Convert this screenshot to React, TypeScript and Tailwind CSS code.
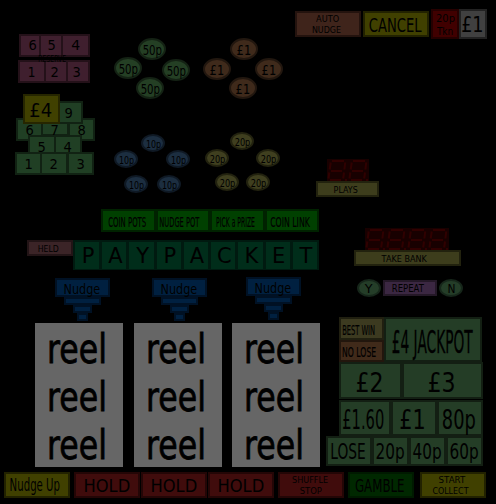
import { useLayoutEffect, useRef, type ReactNode } from "react";
import { clsx } from "clsx";

/** Lamp caption, squeezed horizontally so its ink is `w` pixels wide. */
function T({ children, w, className }: { children: string; w?: number; className?: string }) {
  const ref = useRef<HTMLSpanElement>(null);
  useLayoutEffect(() => {
    const el = ref.current;
    if (!el || !w) return;
    el.style.transform = "none";
    const size = parseFloat(getComputedStyle(el).fontSize);
    const k = w / (el.getBoundingClientRect().width - size * 0.14);
    el.style.transform = `scaleX(${k})`;
  }, [w, children]);
  return (
    <span ref={ref} className={clsx("inline-block shrink-0 whitespace-nowrap leading-none", className)}>
      {children}
    </span>
  );
}

function Lamp({ className, children }: { className: string; children?: ReactNode }) {
  return (
    <div className={clsx("flex shrink-0 flex-col items-center justify-center border-2", className)}>{children}</div>
  );
}

const GREEN = "bg-[#203f24] border-[#112213]";
const PRIZE = "bg-[#243d26] border-[#131f13]";
const PLUM = "bg-[#3f1f2e] border-[#241119]";
const RED = "bg-[#400c0c] border-[#240606]";

type Spot = [string, string];

function Coins({ spots, label, w, coin, text }: { spots: string[]; label: string; w: number; coin: string; text: string }) {
  return (
    <>
      {spots.map((s) => (
        <Lamp key={s} className={clsx("absolute rounded-[50%]", coin, s)}>
          <T w={w} className={text}>{label}</T>
        </Lamp>
      ))}
    </>
  );
}

const pyramid: Spot[] = [
  ["6", "left-[16px] top-[118px] w-[27px] h-[23px]"],
  ["7", "left-[41px] top-[118px] w-[28px] h-[18px] pt-[5px]"],
  ["8", "left-[68px] top-[118px] w-[27px] h-[23px]"],
  ["4", "left-[54px] top-[135px] w-[28px] h-[23px]"],
  ["5", "left-[28px] top-[135px] w-[28px] h-[23px]"],
  ["1", "left-[15px] top-[152px] w-[27px] h-[23px]"],
  ["3", "left-[67px] top-[152px] w-[27px] h-[23px]"],
  ["2", "left-[40px] top-[152px] w-[28px] h-[23px]"],
  ["9", "left-[55px] top-[101px] w-[28px] h-[23px]"],
];

function Digit() {
  return (
    <svg width="21" height="23" viewBox="0 0 21 23" className="bg-[#180000]" fill="none" stroke="#300000" strokeWidth="2">
      <path d="M5 2H17M4 12H15M3 21H14M3.7 3.5L2.7 10.5M2.3 13.5L1.5 19.5M18.2 3.5L17.4 10.5M17 13.5L16.2 19.5" />
      <path d="M18 21H20" />
    </svg>
  );
}

function Nudge({ className }: { className: string }) {
  const step = "bg-[#002040] border-[#001124]";
  return (
    <div className={clsx("flex w-[55px] flex-col items-center", className)}>
      <Lamp className={clsx("h-[19px] w-[55px]", step)}>
        <T w={35} className="-translate-x-px translate-y-px text-[14px]">Nudge</T>
      </Lamp>
      <Lamp className={clsx("h-2 w-[37px]", step)} />
      <Lamp className={clsx("h-2 w-[19px]", step)} />
      <Lamp className={clsx("h-2 w-[11px]", step)} />
    </div>
  );
}

function Reel() {
  return (
    <div className="flex h-36 w-[88px] flex-col bg-[#666]">
      {[0, 1, 2].map((i) => (
        <div key={i} className="flex h-12 items-center justify-center">
          <T w={55.5} className="-translate-x-[2px] translate-y-[1.5px] text-[40px] [-webkit-text-stroke:0.8px_black]">reel</T>
        </div>
      ))}
    </div>
  );
}

export default function App() {
  return (
    <main className="relative flex h-[504px] w-[496px] flex-col overflow-hidden bg-black font-['DejaVu_Sans',sans-serif] text-black">
      <header className="flex h-[34px] shrink-0 items-start pl-[295px] pt-[9px]">
        <Lamp className="mr-[2px] mt-[2px] h-[26px] w-[66px] border-[#24130e] bg-[#3f241b]">
          <T w={22} className="text-[9px]">AUTO</T>
          <T w={28} className="-translate-x-[2px] translate-y-[2px] text-[9px]">NUDGE</T>
        </Lamp>
        <Lamp className="mr-[2px] mt-[2px] h-[26px] w-[66px] border-[#222200] bg-[#404000]">
          <T w={51} className="-translate-x-px translate-y-px text-[19px]">CANCEL</T>
        </Lamp>
        <Lamp className="h-[30px] w-[28px] border-[#260000] bg-[#400000]">
          <T w={17.5} className="text-[11px]">20p</T>
          <T w={15} className="translate-y-[1.5px] text-[11px]">Tkn</T>
        </Lamp>
        <Lamp className="h-[30px] w-[28px] border-[#222] bg-[#404040]">
          <T w={20} className="-translate-x-px translate-y-px text-[21px]">£1</T>
        </Lamp>
      </header>

      <div className="flex h-[438px] shrink-0">
        <div className="flex w-[326px] shrink-0 flex-col">
          <div className="flex h-[175px]">
            <div className="w-[105px] shrink-0">
              <div className="ml-[19px] flex">
                <Lamp className={clsx("h-[23px] w-[22px]", PLUM)}><T w={6.5} className="translate-x-[3px] text-[14.5px]">6</T></Lamp>
                <Lamp className={clsx("h-[23px] w-[22px] border-l-0", PLUM)}><T w={6.5} className="translate-x-[1px] text-[14.5px]">5</T></Lamp>
                <Lamp className={clsx("h-[23px] w-[27px] border-l-0", PLUM)}><T w={7} className="text-[14.5px]">4</T></Lamp>
              </div>
              <div className="relative z-10 ml-[39px] flex h-[3px] w-[27px] items-center justify-center">
                <T w={27} className="translate-y-[1px] text-[8px]">RESERVE</T>
              </div>
              <div className="ml-[18px] flex">
                <Lamp className={clsx("h-[23px] w-[28px]", PLUM)}><T w={6} className="translate-y-px text-[14.5px]">1</T></Lamp>
                <Lamp className={clsx("h-[23px] w-[22px] border-l-0", PLUM)}><T w={6.5} className="-translate-x-[1px] translate-y-px text-[14.5px]">2</T></Lamp>
                <Lamp className={clsx("h-[23px] w-[22px] border-l-0", PLUM)}><T w={6.5} className="-translate-x-[1px] translate-y-px text-[14.5px]">3</T></Lamp>
              </div>
              {pyramid.map(([n, pos]) => (
                <Lamp key={n} className={clsx("absolute", GREEN, pos)}>
                  <T w={6.5} className="translate-y-px text-[14.5px]">{n}</T>
                </Lamp>
              ))}
              <Lamp className="absolute left-[23px] top-[94px] h-[30px] w-[37px] border-[#262600] bg-[#404000]">
                <T w={20.5} className="-translate-x-px translate-y-px text-[20px]">£4</T>
              </Lamp>
            </div>
            <Coins label="50p" w={18} coin="h-[22px] w-[28px] bg-[#243f24] border-[#142214]" text="translate-y-px text-[14px]"
              spots={["left-[138px] top-[38px]", "left-[114px] top-[57px]", "left-[162px] top-[59px]", "left-[136px] top-[77px]"]} />
            <Coins label="£1" w={13} coin="h-[22px] w-[28px] bg-[#3f2a1b] border-[#22170f]" text="translate-y-px text-[14px]"
              spots={["left-[230px] top-[38px]", "left-[203px] top-[58px]", "left-[255px] top-[58px]", "left-[229px] top-[77px]"]} />
            <Coins label="10p" w={14} coin="h-[18px] w-[24px] bg-[#1c2e40] border-[#0f1924]" text="translate-y-px text-[11px]"
              spots={["left-[141px] top-[134px]", "left-[114px] top-[150px]", "left-[166px] top-[150px]", "left-[124px] top-[175px]", "left-[157px] top-[175px]"]} />
            <Coins label="20p" w={14.5} coin="h-[18px] w-[24px] bg-[#3f3f1f] border-[#22220f]" text="translate-y-px text-[11px]"
              spots={["left-[230px] top-[132px]", "left-[205px] top-[149px]", "left-[256px] top-[149px]", "left-[215px] top-[173px]", "left-[246px] top-[173px]"]} />
          </div>

          <div className="ml-[101px] grid h-[23px] w-[218px] shrink-0 grid-cols-4">
            {([["COIN POTS", 37, "-translate-x-[1.5px]"], ["NUDGE POT", 39, "-translate-x-[3px]"], ["PICK a PRIZE", 38, "-translate-x-[2px]"], ["COIN LINK", 38.5, "-translate-x-[2px]"]] as const).map(([s, w, dx]) => (
              <Lamp key={s} className="border-[#002200] bg-[#004000]">
                <T w={w} className={clsx("translate-y-[1.5px] text-[14.5px] [-webkit-text-stroke:0.2px_black]", dx)}>{s}</T>
              </Lamp>
            ))}
          </div>

          <div className="ml-[27px] mt-2 flex h-[30px] shrink-0 items-start">
            <Lamp className="h-4 w-[46px] border-[#221416] bg-[#3b2427]">
              <T w={20} className="-translate-x-[2px] translate-y-px text-[9px]">HELD</T>
            </Lamp>
            <div className="grid h-[30px] w-[246px] grid-cols-9 gap-x-[3px] bg-[#001a10] px-[2px] pb-px pt-[2px]">
              {"PAYPACKET".split("").map((c, i) => (
                <div key={i} className="flex items-center justify-center bg-[#002d1a]">
                  <T className="translate-x-px translate-y-px text-[21px]">{c}</T>
                </div>
              ))}
            </div>
          </div>

          <div className="ml-[55px] mt-2 flex h-[45px] shrink-0">
            <Nudge className="mr-[42px]" />
            <Nudge className="mr-[39px]" />
            <Nudge className="-mt-px" />
          </div>

          <div className="ml-[35px] flex">
            <Reel />
            <div className="w-[11px]" />
            <Reel />
            <div className="w-[10px]" />
            <Reel />
          </div>
        </div>

        <div className="w-[170px]">
          <div className="-ml-[10px] mt-[125px] flex w-[63px] flex-col items-center">
            <div className="flex"><Digit /><Digit /></div>
            <Lamp className="-mt-px h-4 w-[63px] border-[#22220e] bg-[#3d3d1c]">
              <T w={23} className="-translate-x-[2px] translate-y-px text-[9px]">PLAYS</T>
            </Lamp>
          </div>
          <div className="ml-[28px] mt-[31px] flex w-[107px] flex-col items-center">
            <div className="-ml-px flex"><Digit /><Digit /><Digit /><Digit /></div>
            <Lamp className="-mt-px h-4 w-[107px] border-[#22220e] bg-[#3d3d1c]">
              <T w={44} className="-translate-x-[3px] translate-y-px text-[9px]">TAKE BANK</T>
            </Lamp>
          </div>
          <div className="ml-[31px] mt-[13px] flex h-[18px] items-center gap-[2px]">
            <Lamp className="h-[18px] w-[24px] rounded-[50%] border-[#16261a] bg-[#243d28]">
              <T w={6} className="translate-y-px text-[12px]">Y</T>
            </Lamp>
            <Lamp className="h-4 w-[54px] border-[#241827] bg-[#3b2742]">
              <T w={31} className="-translate-x-[2px] translate-y-px text-[10px]">REPEAT</T>
            </Lamp>
            <Lamp className="h-[18px] w-[24px] rounded-[50%] border-[#16261a] bg-[#243d28]">
              <T w={6.5} className="translate-y-px text-[12px]">N</T>
            </Lamp>
          </div>

          <div className="mt-[20px] flex flex-col">
            <div className="ml-[13px] flex h-[45px]">
              <div className="flex w-[45px] flex-col">
                <Lamp className="h-[23px] border-[#201f10] bg-[#3c3a20]">
                  <T w={32} className="-translate-x-[3px] translate-y-[1.5px] text-[14.5px] [-webkit-text-stroke:0.2px_black]">BEST WIN</T>
                </Lamp>
                <Lamp className="h-[22px] border-[#22160d] bg-[#402a1a]">
                  <T w={33} className="-translate-x-[2px] translate-y-px text-[14.5px] [-webkit-text-stroke:0.2px_black]">NO LOSE</T>
                </Lamp>
              </div>
              <Lamp className={clsx("w-[98px]", PRIZE)}>
                <T w={79} className="-translate-x-px translate-y-[1.5px] text-[32px] [-webkit-text-stroke:0.3px_black]">£4 JACKPOT</T>
              </Lamp>
            </div>
            <div className="ml-[13px] flex h-[37px]">
              <Lamp className={clsx("w-[63px]", PRIZE)}><T w={25} className="-translate-x-px translate-y-[2px] text-[26px]">£2</T></Lamp>
              <Lamp className={clsx("w-[81px]", PRIZE)}><T w={25} className="-translate-x-px translate-y-[2px] text-[26px]">£3</T></Lamp>
            </div>
            <div className="ml-[13px] mt-px flex h-[36px]">
              <Lamp className={clsx("w-[52px]", PRIZE)}><T w={40} className="-translate-x-[2px] translate-y-[2px] text-[26px]">£1.60</T></Lamp>
              <Lamp className={clsx("w-[46px]", PRIZE)}><T w={23.5} className="-translate-x-px translate-y-[2px] text-[26px]">£1</T></Lamp>
              <Lamp className={clsx("w-[46px]", PRIZE)}><T w={31.5} className="-translate-x-px translate-y-[2px] text-[26px]">80p</T></Lamp>
            </div>
            <div className="flex h-[30px]">
              <Lamp className={clsx("w-[46px]", PRIZE)}><T w={33.5} className="-translate-x-px translate-y-px text-[21px]">LOSE</T></Lamp>
              {["20p", "40p", "60p"].map((s) => (
                <Lamp key={s} className={clsx("w-[37px]", PRIZE)}><T w={27} className="translate-y-px text-[21px]">{s}</T></Lamp>
              ))}
            </div>
          </div>
        </div>
      </div>

      <footer className="flex h-[26px] shrink-0 pl-1">
        <Lamp className="mr-1 w-[66px] border-[#222200] bg-[#404000]">
          <T w={49} className="-translate-x-[2.5px] translate-y-px text-[17.5px]">Nudge Up</T>
        </Lamp>
        {["mr-px", "mr-px", "mr-1"].map((gap, i) => (
          <Lamp key={i} className={clsx("w-[66px]", RED, gap)}>
            <T w={44.5} className="-translate-x-[0.5px] translate-y-px text-[17px]">HOLD</T>
          </Lamp>
        ))}
        <Lamp className={clsx("mr-1 w-[66px]", RED)}>
          <T w={35} className="-translate-x-px text-[9px]">SHUFFLE</T>
          <T w={21} className="translate-y-[2px] text-[9px]">STOP</T>
        </Lamp>
        <Lamp className="mr-[6px] w-[66px] border-[#001a00] bg-[#002800]">
          <T w={48} className="-translate-x-px translate-y-px text-[18px]">GAMBLE</T>
        </Lamp>
        <Lamp className="w-[66px] border-[#222200] bg-[#404000]">
          <T w={25.5} className="-translate-x-px text-[9px]">START</T>
          <T w={35} className="-translate-x-[3px] translate-y-[2px] text-[9px]">COLLECT</T>
        </Lamp>
      </footer>
    </main>
  );
}
